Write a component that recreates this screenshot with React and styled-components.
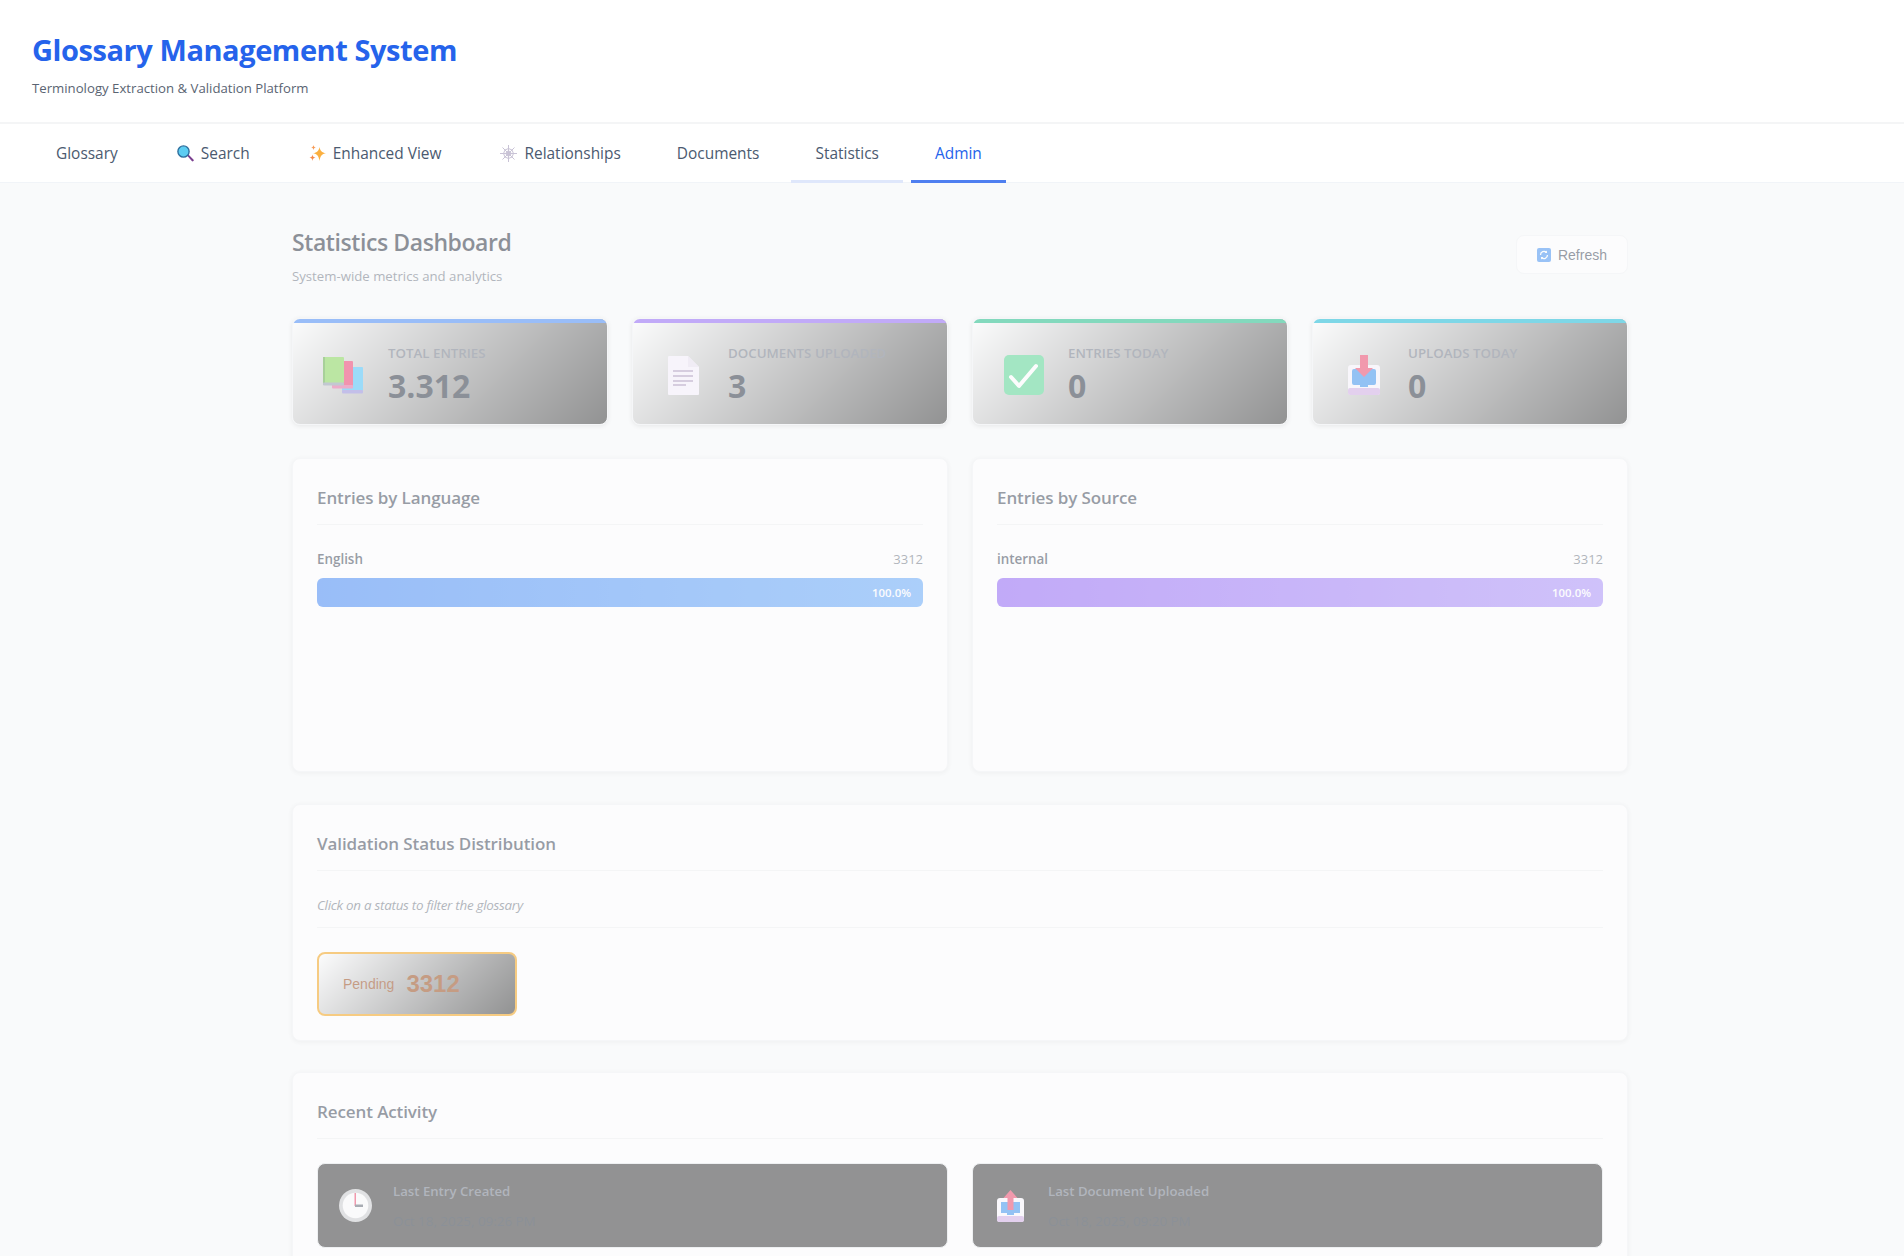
import React from 'react'
import styled, { createGlobalStyle } from 'styled-components'

const GlobalStyle = createGlobalStyle`
    html, body { margin: 0; padding: 0; }
    body { background: #f9fafb; font-family: "Open Sans", "Noto Sans", sans-serif; color: #1f2937; }
    * { box-sizing: border-box; }
`
const Page = styled.div`
    height: 100vh;
    overflow: hidden;
    background: #f9fafb;
`
const Header = styled.header`
    height: 124px;
    background: #fff;
    border-bottom: 2px solid #f4f5f6;
    padding: 32px 32px 0;
`
const Title = styled.h1`
    margin: 0;
    font-size: 29px;
    line-height: 36px;
    font-weight: 700;
    color: #2563eb;
    letter-spacing: -0.43px;
`
const Subtitle = styled.p`
    margin: 11px 0 0;
    font-size: 13.2px;
    line-height: 18px;
    color: #5a6472;
`
const Nav = styled.nav`
    height: 59px;
    background: #fff;
    border-bottom: 1px solid #f1f4f8;
    display: flex;
    gap: 8px;
    padding: 0 32px;
`
const Tab = styled.div`
    display: flex;
    align-items: center;
    gap: 7px;
    height: 59px;
    padding: 2px 24px 0;
    font-size: 15.45px;
    font-weight: 500;
    white-space: nowrap;
    color: ${p => p.$color || '#4b5a70'};
    border-bottom: 3px solid ${p => p.$line || 'transparent'};
    svg { margin-left: 3px; }
`
const Content = styled.main`
    max-width: 1400px;
    margin-left: 260px;
    padding: 43px 32px 32px;
    opacity: 0.5;
`
const TopRow = styled.div`
    display: flex;
    justify-content: space-between;
    align-items: flex-start;
    margin-bottom: 32px;
`
const Heading = styled.h2`
    margin: 0;
    font-size: 23px;
    line-height: 32px;
    font-weight: 600;
    color: #1f2937;
    letter-spacing: -0.42px;
`
const HeadingSub = styled.p`
    margin: 8px 0 0;
    font-size: 13.2px;
    line-height: 20px;
    color: #6b7280;
`
const RefreshButton = styled.button`
    display: flex;
    align-items: center;
    gap: 7px;
    height: 39px;
    margin-top: 9px;
    padding: 0 20px;
    background: #fff;
    border: 1px solid #f3f4f6;
    border-radius: 8px;
    font-family: "Liberation Sans", Arial, sans-serif;
    font-size: 14px;
    color: #374151;
`
const StatGrid = styled.div`
    display: grid;
    grid-template-columns: repeat(4, 1fr);
    gap: 24px;
    margin-bottom: 33px;
`
const StatCard = styled.div`
    position: relative;
    height: 107px;
    display: flex;
    align-items: center;
    padding: 7px 24px 0 30px;
    gap: 24px;
    border-radius: 8px;
    border: 1px solid #f3f4f6;
    background: linear-gradient(135deg, #ffffff 0%, #2d2d2d 100%);
    box-shadow: 0 1px 4px rgba(0, 0, 0, 0.14);
    overflow: hidden;
    &::before {
        content: '';
        position: absolute;
        top: 0;
        left: 0;
        right: 0;
        height: 4px;
        background: ${p => p.$accent};
    }
`
const StatIcon = styled.div`
    width: 41px;
    height: 40px;
    flex: none;
    display: flex;
    align-items: center;
    justify-content: center;
`
const StatBody = styled.div`
    min-width: 0;
    white-space: nowrap;
`
const StatLabel = styled.div`
    font-size: 13.3px;
    line-height: 18px;
    font-weight: 600;
    text-transform: uppercase;
    color: #6b7280;
`
const StatValue = styled.div`
    margin-top: 4px;
    font-size: 32px;
    line-height: 40px;
    font-weight: 700;
    color: #1f2937;
`
const TwoCols = styled.div`
    display: grid;
    grid-template-columns: 1fr 1fr;
    gap: 24px;
    margin-bottom: 32px;
`
const Panel = styled.section`
    background: #fff;
    border: 1px solid #f3f4f6;
    border-radius: 8px;
    padding: 24px;
    min-height: ${p => p.$minHeight || 0}px;
    margin-bottom: ${p => p.$gap || 0}px;
    box-shadow: 0 1px 4px rgba(0, 0, 0, 0.08);
`
const PanelTitle = styled.h3`
    margin: 0 0 24px;
    padding-bottom: 11px;
    font-size: 17px;
    line-height: 30px;
    font-weight: 600;
    letter-spacing: -0.1px;
    color: #374151;
    border-bottom: 1px solid #f0f1f3;
`
const BarHead = styled.div`
    display: flex;
    justify-content: space-between;
    font-size: 13.4px;
    line-height: 20px;
    margin-bottom: 9px;
`
const BarName = styled.span`
    font-weight: 600;
    color: #374151;
`
const BarCount = styled.span`
    font-size: 13px;
    color: #6b7280;
`
const BarTrack = styled.div`
    height: 29px;
    border-radius: 6px;
    overflow: hidden;
    background: #f3f4f6;
`
const BarFill = styled.div`
    height: 100%;
    display: flex;
    align-items: center;
    justify-content: flex-end;
    padding-right: 12px;
    background: linear-gradient(90deg, ${p => p.$from}, ${p => p.$to});
    color: #fff;
    font-size: 11.4px;
    font-weight: 600;
`
const Note = styled.p`
    margin: 0 0 24px;
    padding-bottom: 12px;
    font-size: 13.4px;
    line-height: 20px;
    font-style: italic;
    letter-spacing: -0.27px;
    color: #6b7280;
    border-bottom: 1px solid #f0f1f3;
`
const StatusButton = styled.button`
    display: flex;
    align-items: center;
    gap: 12px;
    width: 200px;
    height: 64px;
    padding: 0 24px;
    border: 2px solid #f59e0b;
    border-radius: 8px;
    background: linear-gradient(135deg, #ffffff 0%, #2d2d2d 100%);
    font-family: "Liberation Sans", Arial, sans-serif;
    color: #92400e;
`
const StatusName = styled.span`
    font-size: 14px;
`
const StatusCount = styled.span`
    font-size: 24px;
    font-weight: 700;
`
const ActivityGrid = styled.div`
    display: grid;
    grid-template-columns: 1fr 1fr;
    gap: 24px;
`
const ActivityCard = styled.div`
    height: 85px;
    display: flex;
    align-items: center;
    gap: 21px;
    padding: 0 21px;
    background: #2d2d2d;
    border: 1px solid #e5e7eb;
    border-radius: 8px;
`
const ActivityIcon = styled.div`
    width: 33px;
    flex: none;
    display: flex;
    justify-content: center;
`
const ActivityLabel = styled.div`
    font-size: 13.2px;
    line-height: 20px;
    font-weight: 600;
    color: #6b7280;
`
const ActivityDate = styled.div`
    margin-top: 10px;
    font-size: 13.4px;
    line-height: 20px;
    color: #1f2937;
`

const SearchIcon = () => (
    <svg width="17" height="17" viewBox="0 0 17 17">
        <path d="M10 10.5l1.2-1.2 5.2 5.2a1 1 0 0 1-1.6 1.6z" fill="#7a3f8f" />
        <circle cx="6.5" cy="6.5" r="5.6" fill="#5ccdf2" stroke="#2e6f9e" strokeWidth="1.4" />
    </svg>
)
const SparkIcon = () => (
    <svg width="17" height="17" viewBox="0 0 17 17">
        <path d="M10.500 2c.8 4 2.200 5.400 6.500 6.300-4.300.9-5.700 2.400-6.500 7.700-.8-5.300-2.200-6.800-6.500-7.700 4.300-.9 5.700-2.300 6.500-6.300z" fill="#fbb040" />
        <path d="M3.500 9.500c.3 2 1 2.700 3 3-2 .4-2.700 1.100-3 3.500-.3-2.400-1-3.100-3-3.500 2-.3 2.700-1 3-3z" fill="#f58a4b" />
        <path d="M4.500 0c.3 1.700.8 2.200 2.500 2.500-1.700.4-2.200.9-2.500 2.700-.3-1.800-.8-2.300-2.500-2.700 1.700-.3 2.200-.8 2.500-2.500z" fill="#f79a55" />
    </svg>
)
const WebIcon = () => (
    <svg width="17" height="17" viewBox="0 0 17 17" fill="none" stroke="#c9c3d6" strokeWidth="1">
        <path d="M8.500 0v17M0 8.500h17M2.500 2.500l12 12M14.500 2.500l-12 12" />
        <path d="M8.500 3.500l3.500 1.500 1.500 3.500-1.500 3.500-3.500 1.500-3.500-1.500-1.500-3.500 1.500-3.500z" />
        <path d="M8.500 6l1.800.7.7 1.800-.7 1.800-1.800.7-1.800-.7-.7-1.800.7-1.800z" />
    </svg>
)
const BooksIcon = () => (
    <svg width="41" height="37" viewBox="0 0 41 37">
        <rect x="19" y="10" width="21" height="24" rx="1" fill="#3fbdf8" />
        <rect x="19" y="33" width="21" height="3.500" rx="1" fill="#8f86d8" />
        <rect x="9" y="4" width="21" height="25" rx="1" fill="#ea2f63" />
        <rect x="9" y="28" width="21" height="3.500" rx="1" fill="#e0609a" />
        <rect x="0" y="0" width="21" height="26" rx="1" fill="#7fd34e" />
        <rect x="0" y="0" width="2" height="28" fill="#5aa83c" />
        <rect x="0" y="25.500" width="21" height="3" rx="1" fill="#8d98a8" />
    </svg>
)
const DocIcon = () => (
    <svg width="31" height="39" viewBox="0 0 31 39">
        <path d="M1 0h19l11 11v27a1 1 0 0 1-1 1H1a1 1 0 0 1-1-1V1a1 1 0 0 1 1-1z" fill="#f6effb" />
        <path d="M20 0l11 11H20z" fill="#e8dff0" />
        <path d="M5 15h20M5 20h20M5 25h20M5 29h13" stroke="#9f88b4" strokeWidth="1.300" />
    </svg>
)
const CheckIcon = () => (
    <svg width="40" height="40" viewBox="0 0 40 40">
        <rect width="40" height="40" rx="5" fill="#4fd38c" />
        <path d="M7 22l8 9 17-20" fill="none" stroke="#fff" strokeWidth="4" strokeLinecap="round" strokeLinejoin="round" />
    </svg>
)
const InboxIcon = () => (
    <svg width="32" height="40" viewBox="0 0 32 40">
        <rect x="0" y="10" width="32" height="30" rx="3" fill="#f8f4fb" />
        <rect x="0" y="33" width="32" height="7" rx="2" fill="#cfa8e2" />
        <path d="M4 16a2 2 0 0 1 2-2h5l5 4 5-4h5a2 2 0 0 1 2 2v12a2 2 0 0 1-2 2h-6v2h-8v-2H6a2 2 0 0 1-2-2z" fill="#2f8cef" />
        <path d="M12 0h8v13h5l-9 9-9-9h5z" fill="#ea3b62" />
    </svg>
)
const OutboxIcon = () => (
    <svg width="27" height="32" viewBox="0 0 27 32">
        <rect x="0" y="8" width="27" height="24" rx="3" fill="#fbf7fd" />
        <rect x="0" y="26" width="27" height="6" rx="2" fill="#cfa8e2" />
        <path d="M4 12h19v11h-6v2H10v-2H4z" fill="#2f8cef" />
        <path d="M13.500 0l7 8h-4v12h-6V8h-4z" fill="#ea3b62" />
    </svg>
)
const ClockIcon = () => (
    <svg width="33" height="33" viewBox="0 0 33 33">
        <circle cx="16.500" cy="16.500" r="16.500" fill="#c9c9cc" />
        <circle cx="16.500" cy="16.500" r="12.800" fill="#fbfafb" />
        <path d="M15.500 4h1.500v13h-1.500z" fill="#ea3b62" />
        <path d="M16 15.500h8v2.500h-8z" fill="#59616e" />
    </svg>
)
const RefreshIcon = () => (
    <svg width="14" height="14" viewBox="0 0 14 14">
        <rect width="14" height="14" rx="2" fill="#3b8cf2" />
        <path d="M3.500 7a3.500 3.500 0 0 1 6-2.500M10.500 7a3.500 3.500 0 0 1-6 2.500" fill="none" stroke="#fff" strokeWidth="1.300" />
        <path d="M10 2.500v2.500H7.500zM4 11.500V9h2.500z" fill="#fff" />
    </svg>
)

const tabs = [
    { label: 'Glossary' },
    { label: 'Search', icon: <SearchIcon /> },
    { label: 'Enhanced View', icon: <SparkIcon /> },
    { label: 'Relationships', icon: <WebIcon /> },
    { label: 'Documents' },
    { label: 'Statistics', line: '#dfe7fb' },
    { label: 'Admin', color: '#2563eb', line: '#4f7ff0' },
]
const stats = [
    { label: 'Total Entries', value: '3.312', accent: '#3b82f6', icon: <BooksIcon /> },
    { label: 'Documents Uploaded', value: '3', accent: '#8b5cf6', icon: <DocIcon /> },
    { label: 'Entries Today', value: '0', accent: '#10b981', icon: <CheckIcon /> },
    { label: 'Uploads Today', value: '0', accent: '#06b6d4', icon: <InboxIcon /> },
]
const bars = [
    { title: 'Entries by Language', name: 'English', from: '#3b82f6', to: '#60a5fa' },
    { title: 'Entries by Source', name: 'internal', from: '#8b5cf6', to: '#a78bfa' },
]
const activity = [
    { label: 'Last Entry Created', date: 'Oct 18, 2025, 09:26 PM', icon: <ClockIcon /> },
    { label: 'Last Document Uploaded', date: 'Oct 18, 2025, 09:20 PM', icon: <OutboxIcon /> },
]

const App = () => {
    return (
        <Page>
            <GlobalStyle />
            <Header>
                <Title>Glossary Management System</Title>
                <Subtitle>Terminology Extraction &amp; Validation Platform</Subtitle>
            </Header>
            <Nav>
                {tabs.map(t => (
                    <Tab key={t.label} $color={t.color} $line={t.line}>{t.icon}{t.label}</Tab>
                ))}
            </Nav>
            <Content>
                <TopRow>
                    <div>
                        <Heading>Statistics Dashboard</Heading>
                        <HeadingSub>System-wide metrics and analytics</HeadingSub>
                    </div>
                    <RefreshButton><RefreshIcon />Refresh</RefreshButton>
                </TopRow>
                <StatGrid>
                    {stats.map(s => (
                        <StatCard key={s.label} $accent={s.accent}>
                            <StatIcon>{s.icon}</StatIcon>
                            <StatBody>
                                <StatLabel>{s.label}</StatLabel>
                                <StatValue>{s.value}</StatValue>
                            </StatBody>
                        </StatCard>
                    ))}
                </StatGrid>
                <TwoCols>
                    {bars.map(b => (
                        <Panel key={b.title} $minHeight={314}>
                            <PanelTitle>{b.title}</PanelTitle>
                            <BarHead><BarName>{b.name}</BarName><BarCount>3312</BarCount></BarHead>
                            <BarTrack><BarFill $from={b.from} $to={b.to}>100.0%</BarFill></BarTrack>
                        </Panel>
                    ))}
                </TwoCols>
                <Panel $gap={31}>
                    <PanelTitle>Validation Status Distribution</PanelTitle>
                    <Note>Click on a status to filter the glossary</Note>
                    <StatusButton><StatusName>Pending</StatusName><StatusCount>3312</StatusCount></StatusButton>
                </Panel>
                <Panel>
                    <PanelTitle>Recent Activity</PanelTitle>
                    <ActivityGrid>
                        {activity.map(a => (
                            <ActivityCard key={a.label}>
                                <ActivityIcon>{a.icon}</ActivityIcon>
                                <div>
                                    <ActivityLabel>{a.label}</ActivityLabel>
                                    <ActivityDate>{a.date}</ActivityDate>
                                </div>
                            </ActivityCard>
                        ))}
                    </ActivityGrid>
                </Panel>
            </Content>
        </Page>
    )
}

export default App
